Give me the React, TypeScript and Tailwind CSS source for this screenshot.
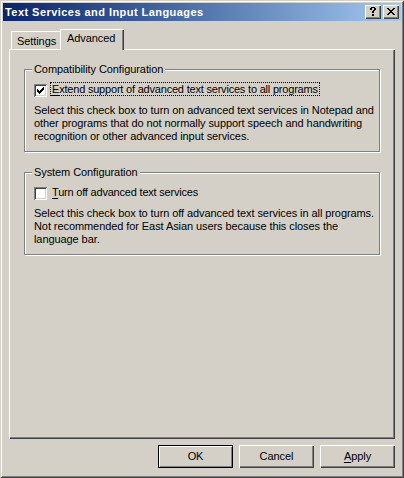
import React from 'react';

// pixel glyphs (Marlett-like) drawn one pixel per rect
function Pixels({ rows, color = '#000' }: { rows: string[]; color?: string }) {
  return (
    <svg width={rows[0].length} height={rows.length} shapeRendering="crispEdges" className="block">
      {rows.flatMap((r, y) =>
        [...r].map((c, x) =>
          c === 'X' ? <rect key={`${x}-${y}`} x={x} y={y} width={1} height={1} fill={color} /> : null
        )
      )}
    </svg>
  );
}

const CHECK = ['......X', '.....XX', 'X...XXX', 'XX.XXX.', 'XXXXX..', '.XXX...', '..X....'];
const CLOSE = ['XX....XX', '.XX..XX.', '..XXXX..', '...XX...', '..XXXX..', '.XX..XX.', 'XX....XX'];
const HELP = ['.XXXX.', 'XX..XX', 'XX..XX', '...XX.', '..XX..', '..XX..', '......', '..XX..', '..XX..'];

const raised = 'shadow-[inset_1px_1px_#fff,inset_-1px_-1px_#404040,inset_-2px_-2px_#808080]';

function CaptionButton({ glyph, className = '' }: { glyph: string[]; className?: string }) {
  return (
    <div className={`w-[16px] h-[14px] bg-[#d4d0c8] flex items-center justify-center pr-[1px] pb-[1px] ${raised} ${className}`}>
      <Pixels rows={glyph} />
    </div>
  );
}

function CheckBox({ checked }: { checked?: boolean }) {
  return (
    <div className="mt-[2px] w-[13px] h-[13px] shrink-0 bg-white pl-[3px] pt-[3px] shadow-[inset_1px_1px_#808080,inset_-1px_-1px_#fff,inset_2px_2px_#404040,inset_-2px_-2px_#d4d0c8]">
      {checked && <Pixels rows={CHECK} />}
    </div>
  );
}

function Group({
  title,
  checked,
  focus,
  accel,
  label,
  lines,
  className = '',
}: {
  title: string;
  checked?: boolean;
  focus?: boolean;
  accel: string;
  label: string;
  lines: string[];
  className?: string;
}) {
  return (
    <fieldset
      className={`min-w-0 border border-[#808080] shadow-[1px_1px_#fff,inset_1px_1px_#fff] pl-[9px] pr-[2px] pt-[6px] pb-[8px] ${className}`}
    >
      <legend className="-ml-[2px] px-[2px] bg-[#d4d0c8]">{title}</legend>
      <div className="flex items-start">
        <CheckBox checked={checked} />
        <span
          className={`ml-[3px] h-[14px] px-[1px] border border-dotted whitespace-nowrap leading-[12px] tracking-[-0.2px] ${
            focus ? 'border-black' : 'border-transparent'
          }`}
        >
          <span className="underline underline-offset-[2px]">{accel}</span>
          {label}
        </span>
      </div>
      <p className="mt-[7px] whitespace-nowrap">
        {lines.map((l, i) => (
          <React.Fragment key={i}>
            {l}
            {i < lines.length - 1 && <br />}
          </React.Fragment>
        ))}
      </p>
    </fieldset>
  );
}

function DialogButton({ children, isDefault }: { children: React.ReactNode; isDefault?: boolean }) {
  return (
    <button
      className={`w-[75px] h-[23px] flex items-center justify-center bg-[#d4d0c8] ${
        isDefault ? 'border border-black shadow-[inset_1px_1px_#fff,inset_-1px_-1px_#808080]' : raised
      }`}
    >
      {children}
    </button>
  );
}

export default function App() {
  return (
    <div className="w-[404px] h-[478px] bg-[#d4d0c8] p-[3px] flex flex-col text-[11px] leading-[13px] tracking-[-0.08px] text-black font-['Liberation_Sans',Arial,sans-serif] select-none shadow-[inset_1px_1px_#d4d0c8,inset_-1px_-1px_#404040,inset_2px_2px_#fff,inset_-2px_-2px_#808080]">
      {/* Title bar */}
      <div className="h-[18px] flex items-center bg-linear-to-r from-[#0a246a] to-[#a6caf0] pl-[2px] pr-[2px]">
        <span className="flex-1 text-white font-bold whitespace-nowrap tracking-[0.45px]">Text Services and Input Languages</span>
        <CaptionButton glyph={HELP} />
        <CaptionButton glyph={CLOSE} className="ml-[2px]" />
      </div>

      <div className="mt-[8px] ml-[6px] w-[386px] flex flex-col">
        {/* Tabs */}
        <div className="relative z-10 h-[20px] flex items-end pl-[2px]">
          <div className="w-[51px] h-[18px] pl-[6px] pt-[4px] shadow-[inset_1px_1px_#fff,inset_-1px_0_#404040,inset_-2px_0_#808080]">
            Settings
          </div>
          <div className="relative -ml-[2px] -mb-[1px] w-[64px] h-[21px] pl-[7px] pt-[3px] bg-[#d4d0c8] shadow-[inset_1px_1px_#fff,inset_-1px_0_#404040,inset_-2px_0_#808080]">
            Advanced
          </div>
        </div>

        {/* Tab panel */}
        <div className={`h-[390px] pt-[14px] px-[15px] ${raised}`}>
          <Group
            title="Compatibility Configuration"
            checked
            focus
            accel="E"
            label="xtend support of advanced text services to all programs"
            lines={[
              'Select this check box to turn on advanced text services in Notepad and',
              'other programs that do not normally support speech and handwriting',
              'recognition or other advanced input services.',
            ]}
          />
          <Group
            className="mt-[14px]"
            title="System Configuration"
            accel="T"
            label="urn off advanced text services"
            lines={[
              'Select this check box to turn off advanced text services in all programs.',
              'Not recommended for East Asian users because this closes the',
              'language bar.',
            ]}
          />
        </div>

        {/* Buttons */}
        <div className="mt-[6px] flex justify-end gap-[6px]">
          <DialogButton isDefault>OK</DialogButton>
          <DialogButton>Cancel</DialogButton>
          <DialogButton>
            <span>
              <span className="underline underline-offset-[2px]">A</span>pply
            </span>
          </DialogButton>
        </div>
      </div>
    </div>
  );
}
